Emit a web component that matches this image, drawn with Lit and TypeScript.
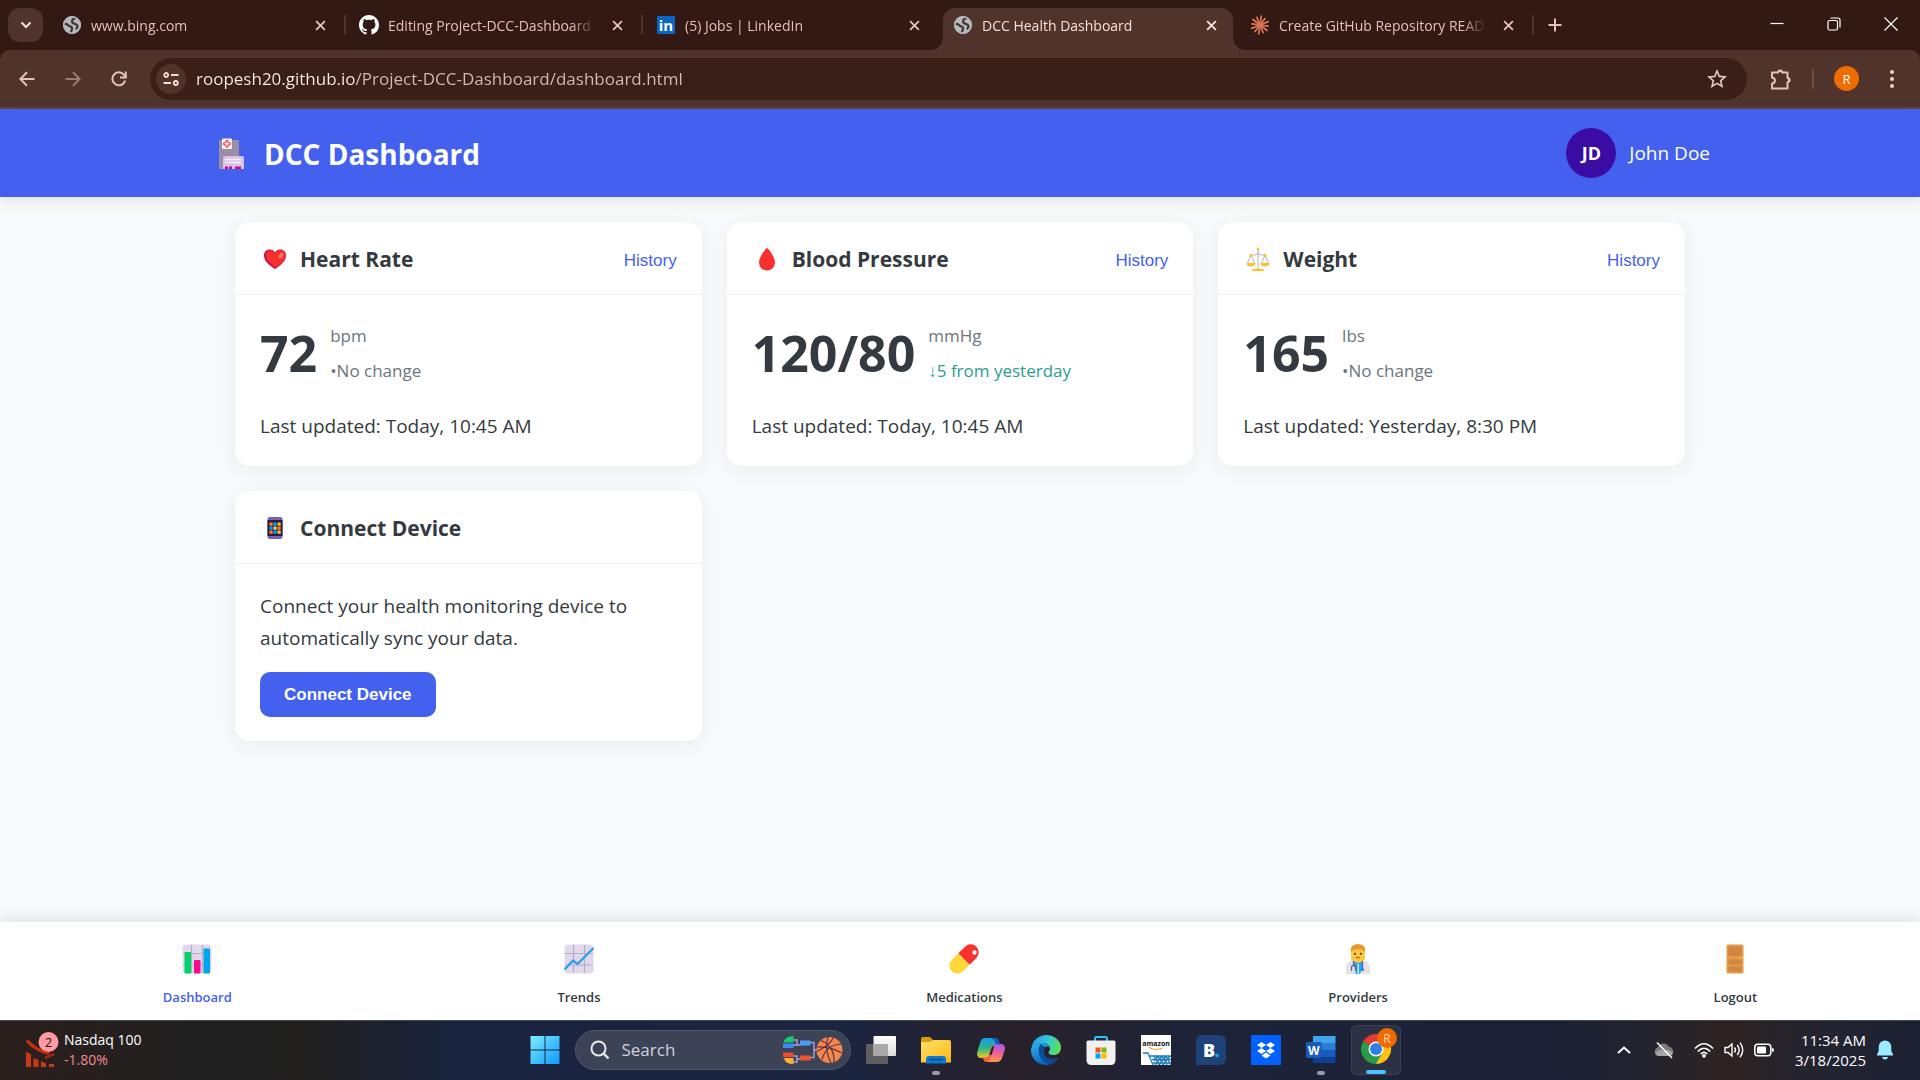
import { LitElement, html, css, svg, nothing, TemplateResult } from "lit";
import { customElement, property } from "lit/decorators.js";

type Icon = TemplateResult;

const globe: Icon = html`<svg viewBox="0 0 18 18" width="18" height="18" aria-hidden="true"><circle cx="9" cy="9" r="9" fill="#b4b9be"/><path d="M12.500 2.200C8.500 2.800 8 6.800 11 7.600S15.500 9.500 13.500 12.500M1.800 8C4.500 7.500 5 10 7.200 10.300S9.500 13 8 15.800" fill="none" stroke="#453330" stroke-width="2.200" stroke-linecap="round"/><circle cx="9" cy="9" r="8.200" fill="none" stroke="#b4b9be" stroke-width="1.600"/></svg>`;

const github: Icon = html`<svg viewBox="0 0 16 16" width="20" height="20" aria-hidden="true"><path fill="#fff" d="M8 0C3.58 0 0 3.58 0 8c0 3.54 2.29 6.53 5.47 7.59.4.07.55-.17.55-.38 0-.19-.01-.82-.01-1.49-2.01.37-2.53-.49-2.69-.94-.09-.23-.48-.94-.82-1.13-.28-.15-.68-.52-.01-.53.63-.01 1.08.58 1.23.82.72 1.21 1.87.87 2.33.66.07-.52.28-.87.51-1.07-1.78-.2-3.64-.89-3.64-3.95 0-.87.31-1.59.82-2.15-.08-.2-.36-1.02.08-2.12 0 0 .67-.21 2.2.82.64-.18 1.32-.27 2-.27.68 0 1.36.09 2 .27 1.53-1.04 2.2-.82 2.2-.82.44 1.1.16 1.92.08 2.12.51.56.82 1.27.82 2.15 0 3.07-1.87 3.75-3.65 3.95.29.25.54.73.54 1.48 0 1.07-.01 1.93-.01 2.2 0 .21.15.46.55.38A8.013 8.013 0 0016 8c0-4.42-3.58-8-8-8z"/></svg>`;

const linkedin: Icon = html`<svg viewBox="0 0 18 18" width="18" height="18" aria-hidden="true"><rect width="18" height="18" rx="1" fill="#0a66c2"/><text x="9" y="15" text-anchor="middle" font-family="Open Sans, sans-serif" font-weight="700" font-size="15" fill="#fff">in</text></svg>`;

const burst: Icon = html`<svg viewBox="0 0 20 20" width="20" height="20" aria-hidden="true"><g stroke="#d97757" stroke-width="1.7" stroke-linecap="round">${Array.from({ length: 12 }, (_, i) => {
  const a = (i * 30 + 8) * (Math.PI / 180);
  const r = i % 2 ? 9 : 8.2;
  return svg`<line x1="10" y1="10" x2=${(10 + r * Math.cos(a)).toFixed(1)} y2=${(10 + r * Math.sin(a)).toFixed(1)}/>`;
})}</g></svg>`;

const cross: Icon = html`<svg viewBox="0 0 10 10" width="11" height="11" aria-hidden="true"><path d="M1 1l8 8M9 1l-8 8" stroke="currentColor" stroke-width="1.7" fill="none"/></svg>`;

const hospital: Icon = html`<svg viewBox="0 0 30 32" width="30" height="32" aria-hidden="true"><rect x="4" y="2" width="20" height="29" rx="1" fill="#998ea4"/><rect x="7" y="0.5" width="10" height="10.5" rx="1" fill="#f3eef8"/><path d="M11 2.500h2v2.300h2.300v2h-2.300v2.300h-2v-2.300H8.700v-2H11z" fill="#fff" stroke="#f8312f" stroke-width="1"/><path d="M8 20a2 2 0 0 1 2-2h17a2 2 0 0 1 2 2v11H8z" fill="#d9c3ee"/><path d="M10 21.500h16M10 24.500h16" stroke="#f6effc" stroke-width="1.300"/><path d="M10 28.500h3v2.500h-3zM14 28.500h3v2.500h-3zM20 28.500h6v2.500h-6z" fill="#ca0b7b"/></svg>`;

const heart: Icon = html`<svg viewBox="0 0 24 22" width="24" height="22" aria-hidden="true"><path d="M12 21C6 17 1 13 1 7.500 1 4 3.500 1.500 6.700 1.500c2.300 0 4.300 1.200 5.300 3 1-1.800 3-3 5.300-3C20.500 1.500 23 4 23 7.500c0 5.500-5 9.500-11 13.500z" fill="#ca0b4a"/><path d="M12.500 19.500C7.500 16 3 12.500 3 7.500 3 4.500 5 2.200 7.400 2.200c2.200 0 3.900 1.300 4.600 3.300 1-2.200 3-3.500 5.300-3.500 3 0 5.200 2.400 5.200 5.500 0 5-4.500 8.500-10 12z" fill="#f8312f"/><ellipse cx="18" cy="7.500" rx="2" ry="3.200" transform="rotate(30 18 7.500)" fill="#f37366"/></svg>`;

const drop: Icon = html`<svg viewBox="0 0 24 24" width="24" height="24" aria-hidden="true"><path d="M12 1c1.200 0 8 9 8 14.500A8 8 0 0 1 4 15.500C4 10 10.800 1 12 1z" fill="#f8312f"/></svg>`;

const scales: Icon = html`<svg viewBox="0 0 24 24" width="24" height="24" aria-hidden="true"><path d="M12 3v19M5 8h4q3 0 3-3 0 3 3 3h4M5 8l-3.500 8M5 8l3.500 8M19 8l-3.500 8M19 8l3.500 8" fill="none" stroke="#b9b2bd" stroke-width="1"/><path d="M0.500 16h9a4.500 3.500 0 0 1-9 0zM14.500 16h9a4.500 3.500 0 0 1-9 0zM5.500 24q0-2.500 6.500-2.500t6.500 2.500z" fill="#fcc02e"/><circle cx="12" cy="2" r="1.400" fill="#fcc02e"/><circle cx="5" cy="8.500" r="1.400" fill="#fcc02e"/><circle cx="19" cy="8.500" r="1.400" fill="#fcc02e"/></svg>`;

const phoneDots = ["#ff822d", "#00a6ed", "#fcc02e", "#00a6ed", "#ffd03e", "#ff822d", "#ff822d", "#00a6ed", "#ffd03e"];
const phone: Icon = html`<svg viewBox="0 0 24 24" width="24" height="24" aria-hidden="true"><rect x="4.500" y="1" width="15" height="22" rx="2" fill="#7867a8"/><rect x="4.500" y="4" width="15" height="16" fill="#2f1a42"/>${phoneDots.map((c, i) => svg`<rect x=${6.5 + (i % 3) * 4} y=${6.5 + Math.floor(i / 3) * 4} width="3.200" height="3.200" rx="0.500" fill=${c}/>`)}</svg>`;

const grid = svg`<rect x="0.500" y="0.500" width="29" height="29" rx="3.500" fill="#e1d8ec"/><path d="M9.500 1v28M20.500 1v28M1 9.500h28M1 21h28" stroke="#b7adc4" stroke-width="1.200"/>`;
const bars: Icon = html`<svg viewBox="0 0 30 30" width="30" height="30" aria-hidden="true">${grid}<rect x="2.500" y="8" width="6.500" height="21.500" rx="1" fill="#00d26a"/><rect x="12" y="16" width="6.500" height="13.500" rx="1" fill="#f70a8d"/><rect x="21.500" y="4.500" width="6.500" height="25" rx="1" fill="#00a6ed"/></svg>`;
const trend: Icon = html`<svg viewBox="0 0 30 30" width="30" height="30" aria-hidden="true">${grid}<path d="M0.500 25.500L9 16.500l4.500 3.500L29.500 4" fill="none" stroke="#26a0ee" stroke-width="2.200"/></svg>`;
const pill: Icon = html`<svg viewBox="0 0 30 30" width="30" height="30" aria-hidden="true"><g transform="rotate(-45 15 15)"><path d="M15 7H5.500a8 8 0 0 0 0 16H15z" fill="#ffd83b"/><path d="M15 7h9.500a8 8 0 0 1 0 16H15z" fill="#f8312f"/></g><circle cx="25.500" cy="8.500" r="2.200" fill="#fff"/></svg>`;
const doctor: Icon = html`<svg viewBox="0 0 30 30" width="30" height="30" aria-hidden="true"><path d="M3 30v-6a8 8 0 0 1 8-8h8a8 8 0 0 1 8 8v6z" fill="#e3e3e6"/><path d="M11 16l4 3 4-3 1 6-3 8h-4l-2-8z" fill="#26a6ee"/><path d="M14.500 20h1.500v10h-1.500z" fill="#cfe9fa"/><path d="M8 7c0-5 3-6.500 7-6.500S22 2 22 7v7c0 2-3 4.500-7 4.500S8 16 8 14z" fill="#ffc83d"/><path d="M8 8C7 2 10.500.2 15 .2S23 2 22 8c-1.500-1-2-2.500-4-2.700q-3-.3-6 0C10 5.500 9.500 7 8 8z" fill="#e8952b"/><circle cx="12" cy="9.800" r="1" fill="#4a2c12"/><circle cx="18" cy="9.800" r="1" fill="#4a2c12"/><path d="M13 14q2-1.500 4 0" stroke="#b5552b" stroke-width="1.200" fill="none"/><path d="M10.500 17v4M8.500 27v-3.500a2.200 2.200 0 0 1 4.400 0V27M19.500 17v8" stroke="#6d5ca3" stroke-width="1.300" fill="none"/><circle cx="19.500" cy="25.500" r="1.600" fill="#1b86d8"/></svg>`;
const door: Icon = html`<svg viewBox="0 0 30 30" width="30" height="30" aria-hidden="true"><rect x="6.500" y="0.500" width="17" height="29" rx="1.500" fill="#e39a4a"/><path d="M8.500 2.500h13v9.500h-13zM8.500 15.500h13v5h-13zM8.500 22.500h13v5h-13z" fill="#d1863f"/><circle cx="21.500" cy="13.500" r="1.300" fill="#fcc02e"/></svg>`;

@customElement("browser-chrome")
class BrowserChrome extends LitElement {
  static styles = css`
    :host { display: block; background: #331913; color: #e7c1b6; font-size: 14px; }
    * { box-sizing: border-box; }
    button { font: inherit; color: inherit; background: none; border: 0; padding: 0; display: flex; align-items: center; justify-content: center; cursor: pointer; }
    svg { flex: none; display: block; }
    .strip { display: flex; height: 50px; align-items: stretch; }
    .search-tabs { width: 35px; height: 34px; margin: 8px 5px 8px 8px; border-radius: 12px; background: #50342c; }
    .tab { position: relative; display: flex; align-items: center; flex: 0 1 297px; min-width: 0; padding: 0 17px 8px 14px; margin-top: 8px; }
    .tab .select { flex: 1; min-width: 0; height: 34px; gap: 9px; justify-content: flex-start; }
    .tab .glyph { width: 20px; display: flex; justify-content: center; flex: none; }
    .title { flex: 1; text-align: left; white-space: nowrap; overflow: hidden; line-height: 20px; padding-top: 1px; mask-image: linear-gradient(90deg, #000 88%, transparent); }
    .close { width: 16px; height: 16px; margin-left: 13px; }
    .tab.divided::after { content: ""; position: absolute; right: -1px; top: 7px; width: 2px; height: 19px; background: #50342c; }
    .tab.active { color: #f8e0d8; }
    .tab.active::before { content: ""; position: absolute; inset: 0 3px 0 4px; background: #50342c; border-radius: 12px 12px 0 0; }
    .tab.active::after { content: ""; position: absolute; left: -8px; right: -9px; bottom: 0; height: 12px; background: radial-gradient(circle at 0 0, transparent 12px, #50342c 12px) left / 12px 12px no-repeat, radial-gradient(circle at 100% 0, transparent 12px, #50342c 12px) right / 12px 12px no-repeat; }
    .tab.active > * { position: relative; z-index: 1; }
    .new-tab { width: 44px; height: 34px; margin-top: 8px; }
    .window { display: flex; margin-left: auto; padding-right: 1px; color: #fff; }
    .window button { width: 57px; height: 48px; }
    .toolbar { display: flex; align-items: center; height: 59px; padding: 0 10px 0 9px; background: #50342c; border-radius: 10px 10px 0 0; border-bottom: 2px solid #5b443e; }
    .toolbar > button { width: 36px; height: 36px; }
    .nav-btns { display: flex; gap: 10px; }
    .nav-btns button { width: 36px; height: 36px; }
    .dim { opacity: 0.5; }
    .omnibox { display: flex; flex: 1; align-items: center; height: 42px; margin: 0 16px 0 13px; padding: 0 19px 0 6px; border-radius: 21px; background: #3a1f18; }
    .site { width: 30px; height: 30px; border-radius: 50%; background: #50342c; flex: none; }
    .url { flex: 1; min-width: 0; margin-left: 10px; padding: 0; border: 0; outline: 0; font: inherit; font-size: 17px; height: 30px; color: transparent; background: linear-gradient(90deg, #fff0ea 158px, #d6bdb4 158px); background-clip: text; -webkit-background-clip: text; }
    .rule { width: 2px; height: 20px; background: #6d4c43; margin: 0 14px 0 13px; }
    .avatar { width: 25px; height: 25px; border-radius: 50%; background: #ef6c00; color: #fff; font-size: 13px; margin: 0 6px; }
    .toolbar > .avatar { width: 25px; height: 25px; }
    .toolbar > .more { margin-left: 9px; }
  `;

  render() {
    const tabs = [
      { title: "www.bing.com", icon: globe, divided: true },
      { title: "Editing Project-DCC-Dashboard", icon: github, divided: true },
      { title: "(5) Jobs | LinkedIn", icon: linkedin },
      { title: "DCC Health Dashboard", icon: globe, active: true },
      { title: "Create GitHub Repository READ", icon: burst, divided: true },
    ];
    return html`
      <div class="strip">
        <button class="search-tabs" aria-label="Search tabs"><svg viewBox="0 0 12 8" width="12" height="8"><path d="M1.500 1.500L6 6l4.500-4.500" fill="none" stroke="#fbe1d8" stroke-width="2"/></svg></button>
        ${tabs.map((t) => html`<div class="tab ${t.active ? "active" : ""} ${t.divided ? "divided" : ""}">
          <button class="select"><span class="glyph">${t.icon}</span><span class="title">${t.title}</span></button>
          <button class="close" aria-label="Close tab">${cross}</button>
        </div>`)}
        <button class="new-tab" aria-label="New tab"><svg viewBox="0 0 14 14" width="14" height="14"><path d="M7 0.500v13M0.500 7h13" stroke="currentColor" stroke-width="2"/></svg></button>
        <div class="window">
          <button aria-label="Minimize"><svg viewBox="0 0 14 14" width="14" height="14"><path d="M0.500 6.500h13" stroke="#fff" stroke-width="1.200"/></svg></button>
          <button aria-label="Restore"><svg viewBox="0 0 14 14" width="14" height="14"><rect x="1" y="3.500" width="9.500" height="9.500" rx="1.500" fill="none" stroke="#fff" stroke-width="1.200"/><path d="M3.500 1h7.500a2 2 0 0 1 2 2v7.500" fill="none" stroke="#fff" stroke-width="1.200"/></svg></button>
          <button aria-label="Close window"><svg viewBox="0 0 14 14" width="14" height="14"><path d="M0.500 0.500l13 13M13.500 0.500l-13 13" stroke="#fff" stroke-width="1.200"/></svg></button>
        </div>
      </div>
      <div class="toolbar">
        <div class="nav-btns">
          <button aria-label="Back"><svg viewBox="0 0 16 16" width="16" height="16"><path d="M15.500 8H1.800M8 1.300L1.300 8 8 14.700" fill="none" stroke="currentColor" stroke-width="2"/></svg></button>
          <button class="dim" aria-label="Forward"><svg viewBox="0 0 16 16" width="16" height="16"><path d="M0.500 8h13.700M8 1.300L14.700 8 8 14.700" fill="none" stroke="currentColor" stroke-width="2"/></svg></button>
          <button aria-label="Reload"><svg viewBox="0 0 16 16" width="16" height="16"><path d="M14.200 9.500A6.500 6.500 0 1 1 12.800 3.500L14.500 5.500" fill="none" stroke="currentColor" stroke-width="2"/><path d="M14.800 0.500v6H9" fill="none" stroke="currentColor" stroke-width="2"/></svg></button>
        </div>
        <div class="omnibox">
          <button class="site" aria-label="Site information"><svg viewBox="0 0 16 16" width="16" height="16"><g fill="none" stroke="#f7dcd3" stroke-width="1.800"><circle cx="3.200" cy="4" r="2"/><path d="M8 4h7.500M0.500 12H8"/><circle cx="12.800" cy="12" r="2"/></g></svg></button>
          <input class="url" aria-label="Address" spellcheck="false" value="roopesh20.github.io/Project-DCC-Dashboard/dashboard.html">
          <button aria-label="Bookmark"><svg viewBox="1 1 22 22" width="22" height="22"><path fill="#e3cbc3" d="M22 9.240l-7.190-.62L12 2 9.190 8.630 2 9.240l5.460 4.730L5.820 21 12 17.270 18.180 21l-1.630-7.030L22 9.240zM12 15.400l-3.760 2.270 1-4.280-3.320-2.880 4.380-.38L12 6.100l1.710 4.040 4.380.38-3.320 2.880 1 4.280L12 15.400z"/></svg></button>
        </div>
        <button aria-label="Extensions"><svg viewBox="0 0 22 22" width="22" height="22"><path d="M2 4.500h6.200a2 2 0 0 1 4 0H17.500V10a2 2 0 0 1 0 4.200V20.500H2V15.500a2.800 2.800 0 0 0 0-5.800z" fill="none" stroke="currentColor" stroke-width="2" stroke-linejoin="round"/><path d="M8.500 4a2 2 0 0 1 4 0zM18 10.200a2 2 0 0 1 0 4z" fill="currentColor"/></svg></button>
        <span class="rule"></span>
        <button class="avatar" aria-label="Profile R">R</button>
        <button class="more" aria-label="Menu"><svg viewBox="0 0 4 18" width="4" height="18"><g fill="#f7cfc3"><circle cx="2" cy="2" r="2"/><circle cx="2" cy="9" r="2"/><circle cx="2" cy="16" r="2"/></g></svg></button>
      </div>`;
  }
}

@customElement("metric-card")
class MetricCard extends LitElement {
  @property() heading = "";
  @property({ type: Boolean }) history = false;
  @property({ attribute: false }) icon: Icon | typeof nothing = nothing;

  static styles = css`
    :host { display: block; background: #fff; border-radius: 15px; box-shadow: 0 5px 19px rgba(0, 0, 0, 0.05); overflow: hidden; }
    header { display: flex; align-items: center; justify-content: space-between; box-sizing: border-box; height: 73px; padding: 1px 25px 0; border-bottom: 1px solid #f0f0f0; }
    h2 { display: flex; align-items: center; gap: 10px; margin: 0; font-size: 21px; line-height: 32px; font-weight: 700; }
    .icon { display: flex; justify-content: center; width: 30px; }
    .icon svg { display: block; }
    button { border: 0; background: none; padding: 4px 0 0 0; color: #4361ee; font: 17px "Liberation Sans", Arial, sans-serif; cursor: pointer; }
    .body { padding: 26px 25px 24px; }
  `;

  render() {
    return html`
      <header>
        <h2><span class="icon">${this.icon}</span>${this.heading}</h2>
        ${this.history ? html`<button>History</button>` : nothing}
      </header>
      <div class="body"><slot></slot></div>`;
  }
}

@customElement("health-dashboard")
class HealthDashboard extends LitElement {
  static styles = css`
    :host { display: flex; flex-direction: column; flex: 1; background: #f8f9fb; color: #343a40; font-size: 19px; line-height: 32px; }
    * { box-sizing: border-box; }
    .top { background: #4361ee; color: #fff; box-shadow: 0 3px 13px rgba(0, 0, 0, 0.1); }
    .wrap { display: flex; align-items: center; justify-content: space-between; max-width: 1500px; margin: 0 auto; height: 88px; }
    .brand { display: flex; align-items: center; gap: 19px; margin: 0; padding: 2px 0 0 5px; font-size: 28px; line-height: 48px; font-weight: 700; }
    .user { display: flex; align-items: center; gap: 13px; }
    .avatar { display: flex; align-items: center; justify-content: center; width: 50px; height: 50px; border-radius: 50%; background: #3a0ca3; font-size: 18px; font-weight: 700; }
    .cards { display: grid; grid-template-columns: repeat(auto-fill, minmax(375px, 1fr)); gap: 25px; align-content: start; width: 100%; max-width: 1500px; margin: 0 auto; padding: 25px; flex: 1; }
    .metric { display: flex; align-items: center; gap: 13px; margin-bottom: 25px; }
    .value { font-size: 50px; line-height: 64px; font-weight: 700; }
    .details { display: flex; flex-direction: column; gap: 6px; font-size: 17px; line-height: 29px; color: #6c757d; }
    .down { color: #2a9d8f; }
    p { margin: 0; }
    .hint { margin-bottom: 18px; }
    .connect { display: block; height: 45px; padding: 0 24px; border: 0; border-radius: 10px; background: #4361ee; color: #fff; font: bold 17px "Liberation Sans", Arial, sans-serif; cursor: pointer; }
    .bottom { display: flex; justify-content: space-around; height: 98px; background: #fff; box-shadow: 0 -3px 13px rgba(0, 0, 0, 0.1); }
    .bottom a { display: flex; flex-direction: column; align-items: center; gap: 11px; padding-top: 22px; color: #343a40; text-decoration: none; font-size: 13px; line-height: 24px; font-weight: 600; }
    .bottom a.current { color: #4361ee; }
    svg { display: block; }
  `;

  render() {
    const metrics = [
      { name: "Heart Rate", icon: heart, value: "72", unit: "bpm", change: "•No change", when: "Today, 10:45 AM" },
      { name: "Blood Pressure", icon: drop, value: "120/80", unit: "mmHg", change: "↓5 from yesterday", down: true, when: "Today, 10:45 AM" },
      { name: "Weight", icon: scales, value: "165", unit: "lbs", change: "•No change", when: "Yesterday, 8:30 PM" },
    ];
    const links = [
      { name: "Dashboard", icon: bars, current: true },
      { name: "Trends", icon: trend },
      { name: "Medications", icon: pill },
      { name: "Providers", icon: doctor },
      { name: "Logout", icon: door },
    ];
    return html`
      <header class="top"><div class="wrap">
        <h1 class="brand">${hospital}<span>DCC Dashboard</span></h1>
        <div class="user"><span class="avatar">JD</span><span>John Doe</span></div>
      </div></header>
      <main class="cards">
        ${metrics.map((m) => html`<metric-card .heading=${m.name} .icon=${m.icon} history>
          <div class="metric">
            <span class="value">${m.value}</span>
            <div class="details"><span>${m.unit}</span><span class=${m.down ? "down" : ""}>${m.change}</span></div>
          </div>
          <p>Last updated: ${m.when}</p>
        </metric-card>`)}
        <metric-card .heading=${"Connect Device"} .icon=${phone}>
          <p class="hint">Connect your health monitoring device to automatically sync your data.</p>
          <button class="connect">Connect Device</button>
        </metric-card>
      </main>
      <nav class="bottom">
        ${links.map((l) => html`<a href="#${l.name.toLowerCase()}" class=${l.current ? "current" : ""}>${l.icon}<span>${l.name}</span></a>`)}
      </nav>`;
  }
}

const taskIcons: { name: string; icon: Icon; state?: string }[] = [
  { name: "Task view", icon: html`<svg viewBox="0 0 30 30" width="30" height="30"><defs><linearGradient id="tv" x1="0" y1="0" x2="0" y2="1"><stop stop-color="#fff"/><stop offset="1" stop-color="#dcdcdc"/></linearGradient></defs><rect x="0" y="9" width="22" height="20" rx="1" fill="#5f5f61"/><rect x="7.500" y="1" width="22.500" height="20" rx="1" fill="url(#tv)"/><path d="M7.500 9H22v12H7.500z" fill="#a9a9a9"/></svg>` },
  { name: "File Explorer", state: "open", icon: html`<svg viewBox="0 0 30 30" width="30" height="30"><defs><linearGradient id="fe" x1="0" y1="0" x2="1" y2="1"><stop stop-color="#ffe06a"/><stop offset="1" stop-color="#fdb813"/></linearGradient></defs><path d="M0 4a2 2 0 0 1 2-2h7l4 4H28v8H0z" fill="#dc9b0a"/><path d="M0 8q0-1 1-1h8l3-2h16a2 2 0 0 1 2 2v20.500H0z" fill="url(#fe)"/><path d="M5 28.500V24a3 3 0 0 1 3-3h14a3 3 0 0 1 3 3v4.500z" fill="#0f78d0"/><path d="M9 24.500h12" stroke="#084a86" stroke-width="1.400" stroke-linecap="round"/></svg>` },
  { name: "Copilot", icon: html`<svg viewBox="0 0 30 30" width="30" height="30"><defs><linearGradient id="c1" x1="0" y1="0" x2="0" y2="1"><stop stop-color="#1a9bf0"/><stop offset="0.500" stop-color="#27b98c"/><stop offset="1" stop-color="#f2cc1c"/></linearGradient><linearGradient id="c2" x1="0" y1="0" x2="0" y2="1"><stop stop-color="#a95af0"/><stop offset="0.500" stop-color="#ee5c95"/><stop offset="1" stop-color="#ff9a4d"/></linearGradient></defs><path d="M9 3h10q3 0 4 4l1 3h-5q-3 0-4 4l-2 7q-1 2-4 2H5Q1 23 1 18L4 8Q5.500 3 9 3z" fill="url(#c1)"/><path d="M21 27H11q-3 0-4-4l-.5-1H10q3 0 4-3l3-8q1-2 4-2h4q4 0 4 5l-3 9q-1.500 4-5 4z" fill="url(#c2)"/><path d="M9 3h10q3 0 4 4l1 2.500h-4Q18 3.500 14 3z" fill="#1457c9"/><path d="M12 22l3.500-11h3L14 24q-1 3-4 3-2-1-3-4.500 4 1 5-.5z" fill="#f0642f"/><path d="M13.500 19.500l2.500-8h2.200L15.500 20z" fill="#1f2233"/></svg>` },
  { name: "Edge", icon: html`<svg viewBox="0 0 30 30" width="30" height="30"><defs><linearGradient id="e1" x1="0" y1="0.300" x2="1" y2="0.600"><stop stop-color="#249be8"/><stop offset="0.500" stop-color="#35c8da"/><stop offset="1" stop-color="#5fe04b"/></linearGradient><linearGradient id="e2" x1="0" y1="0" x2="0.500" y2="1"><stop stop-color="#2fb4ee"/><stop offset="1" stop-color="#0a5fb8"/></linearGradient></defs><path d="M0.500 13C1.500 5 8 0 15 0c8.500 0 15 6 15 12.500 0 5-3.500 7.500-7.500 7.500-4 0-5-1.500-5-2.500 0-1 1.500-1.500 1.500-4C19 10 15 8 11 8 5 8 1 11 .5 13z" fill="url(#e1)"/><path d="M0 15C0 11 4.500 8 10.500 8 15 8 19 10.500 19 13.500c0-2.500-6.500-3.500-6.500 3 0 6 6.500 9.500 14.500 6.500C24.500 27.500 20 30 15 30 6.500 30 0 23.500 0 15z" fill="url(#e2)"/><path d="M10 9c-4 3.500-3.500 16.500 9 20.500 3.500-1 6-3.500 8-6.500-8 3-14.500-.5-14.500-6.500 0-2 .8-3.500 2-4z" fill="#0c4a98"/></svg>` },
  { name: "Store", icon: html`<svg viewBox="0 0 30 30" width="30" height="30"><path d="M9 7V3.500Q9 2 10.500 2h9Q21 2 21 3.500V7" fill="none" stroke="#2cc3f5" stroke-width="2"/><path d="M0.500 7Q0.500 5.500 2 5.500h26q1.500 0 1.500 1.500v18q0 5-5 5h-19q-5 0-5-5z" fill="#f1f1f1"/><path d="M9.500 12.500h5v5h-5z" fill="#f25022"/><path d="M15.500 12.500h5v5h-5z" fill="#7fba00"/><path d="M9.500 18.500h5v5h-5z" fill="#00a4ef"/><path d="M15.500 18.500h5v5h-5z" fill="#ffb900"/></svg>` },
  { name: "Amazon", icon: html`<svg viewBox="0 0 30 30" width="30" height="30"><rect width="30" height="30" fill="#fff"/><text x="15" y="11" text-anchor="middle" font-family="Open Sans, sans-serif" font-weight="700" font-size="7" fill="#111">amazon</text><path d="M8 12.500q7 3.500 13 .5" fill="none" stroke="#f90" stroke-width="1"/><path d="M2 18h5l5 12M9 21h21M11 24.500h19M12 28h18M13 21l5 9M17 21l5 9M21 21l5 9M25 21l5 9M29 21l-7 9M25 21l-7 9M21 21l-7 9M17 21l-4 5" fill="none" stroke="#1b7fb5" stroke-width="1.300"/></svg>` },
  { name: "Booking", icon: html`<svg viewBox="0 0 30 30" width="30" height="30"><path d="M0 6a6 6 0 0 1 6-6h18a6 6 0 0 1 6 6v18a6 6 0 0 1-6 6H0z" fill="#1e4378"/><text x="7" y="22" font-family="Open Sans, sans-serif" font-weight="800" font-size="18" fill="#fff">B</text><circle cx="21" cy="20.500" r="1.900" fill="#12a5e8"/></svg>` },
  { name: "Dropbox", icon: html`<svg viewBox="0 0 30 30" width="30" height="30"><rect width="30" height="30" fill="#0061fe"/><path d="M10.500 7l4.500 3-4.500 3L6 10zM19.500 7l4.500 3-4.500 3-4.500-3zM10.500 13l4.500 3-4.500 3L6 16zM19.500 13l4.500 3-4.500 3-4.500-3zM15 17.500l4.500 3-4.500 3-4.500-3z" fill="#fff"/></svg>` },
  { name: "Word", state: "open", icon: html`<svg viewBox="0 0 30 30" width="30" height="30"><path d="M7 1h22.500v7H7z" fill="#41a5ee"/><path d="M7 8h22.500v7H7z" fill="#2b7cd3"/><path d="M7 15h22.500v7H7z" fill="#185abd"/><path d="M7 22h22.500v6H7z" fill="#103f91"/><rect x="0" y="7" width="15.500" height="16" rx="1" fill="#185abd"/><text x="7.700" y="19.500" text-anchor="middle" font-family="Open Sans, sans-serif" font-weight="700" font-size="12" fill="#fff">W</text></svg>` },
  { name: "Chrome", state: "active", icon: html`<svg class="chrome" viewBox="0 0 40 36" width="40" height="36"><path d="M15 21L2 13.500A15 15 0 0 1 28 13.500z" fill="#e33b2e"/><path d="M15 21L28 13.500A15 15 0 0 1 15 36z" fill="#fbc116"/><path d="M15 21v0L2 13.500A15 15 0 0 0 15 36L21.500 24.800z" fill="#2a9d49"/><circle cx="15" cy="21" r="7.500" fill="#fff"/><circle cx="15" cy="21" r="6" fill="#2f7de9"/><circle cx="26" cy="10" r="10" fill="#ee6a02"/><text x="26" y="14.500" text-anchor="middle" font-family="Open Sans, sans-serif" font-size="12" fill="#ffd9b5">R</text></svg>` },
];

@customElement("task-bar")
class TaskBar extends LitElement {
  static styles = css`
    :host { display: grid; grid-template-columns: 1fr auto 1fr; align-items: center; height: 60px; padding-bottom: 1px; box-sizing: border-box; border-top: 1px solid #45474e; color: #fff; font-size: 14px; line-height: 20px;
      background: linear-gradient(90deg, #2b1f1c 0, #212021 10%, #21201f 16%, #1a2440 24%, #1b2540 44%, #29212a 53%, #1d2338 62%, #1b2137 80%, #222330 85%, #2e2322 90%, #222431 95%, #1c2133 100%); }
    * { box-sizing: border-box; }
    svg { display: block; flex: none; overflow: visible; }
    button { display: flex; align-items: center; justify-content: center; font: inherit; color: inherit; background: none; border: 0; padding: 0; cursor: pointer; }
    .widget { justify-self: start; gap: 8px; padding-left: 26px; text-align: left; }
    .widget span span { display: block; }
    .loss { color: #f28b94; }
    .apps { display: flex; align-items: center; gap: 5px; }
    .app { position: relative; width: 50px; height: 50px; border-radius: 6px; }
    .app.active { background: rgba(255, 255, 255, 0.07); border: 1px solid rgba(255, 255, 255, 0.08); }
    .app.open::after, .app.active::after { content: ""; position: absolute; bottom: 0; width: 8px; height: 4px; border-radius: 2px; background: #9a9ca4; }
    .app.active::after { width: 20px; background: #4cc2ff; }
    .chrome { margin: 0 0 8px 10px; }
    .search { display: flex; align-items: center; gap: 12px; width: 276px; height: 40px; padding: 0 7px 0 14px; border-radius: 20px; background: #3c4357; border: 1px solid #50566a; }
    .search input { flex: 1; min-width: 0; border: 0; outline: 0; padding: 0; background: none; font: inherit; font-size: 17px; color: #fff; }
    .search input::placeholder { color: #cfd1d8; opacity: 1; }
    .tray { display: flex; align-items: center; justify-self: end; padding-right: 23px; }
    .tray button { width: 30px; height: 40px; }
    .tray .wide { width: 40px; }
    .tray .sys { width: 90px; margin-left: 5px; }
    .sys svg { margin: 0 5px; }
    .tray .clock { display: block; width: auto; text-align: right; margin-left: 16px; font-size: 15px; }
    .clock span { display: block; }
    .tray .bell { width: 24px; margin-left: 7px; }
  `;

  render() {
    return html`
      <button class="widget">
        <svg viewBox="0 0 30 36" width="30" height="36" aria-hidden="true"><path d="M1 8.500q7 9 22 13" fill="none" stroke="#c3300f" stroke-width="3.200"/><path d="M19 26l9-4" stroke="#9e2410" stroke-width="3"/><path d="M0 20l5 2v13H0zM7.500 26l5 2v7h-5zM15 29l5 2.500V35h-5zM23 32h5v3h-5z" fill="#c93a14"/><circle cx="22.500" cy="10" r="10" fill="#ff99a4"/><text x="22.500" y="15" text-anchor="middle" font-family="Open Sans, sans-serif" font-size="13" fill="#1c1414">2</text></svg>
        <span><span>Nasdaq 100</span><span class="loss">-1.80%</span></span>
      </button>
      <div class="apps">
        <button class="app" aria-label="Start"><svg viewBox="0 0 30 30" width="30" height="30"><defs><linearGradient id="win" gradientUnits="userSpaceOnUse" x1="0" y1="0" x2="30" y2="30"><stop stop-color="#7ff0ff"/><stop offset="1" stop-color="#0a94ff"/></linearGradient></defs><path d="M0.500 1h14v13.500H0.500zM15.500 1h14v13.500h-14zM0.500 15.500h14V29H0.500zM15.500 15.500h14V29h-14z" fill="url(#win)"/></svg></button>
        <label class="search">
          <svg viewBox="0 0 20 20" width="20" height="20" aria-hidden="true"><circle cx="8.500" cy="8.500" r="7" fill="none" stroke="#e8e9ee" stroke-width="2"/><path d="M13.700 13.700L18.500 18.500" stroke="#e8e9ee" stroke-width="2.400"/></svg>
          <input type="search" placeholder="Search" aria-label="Search">
          <svg viewBox="0 0 60 30" width="60" height="30" aria-hidden="true"><path d="M10 5h4v5h4M10 21h4v3h4M14 10h-4M14 24v3h-4M27 7.500h4v15h-4M31 15h4" fill="none" stroke="#a99fd6" stroke-width="1.500"/><path d="M1 7.500Q1.500 1 10.500 1v6.500z" fill="#1cc872"/><path d="M0 8.500h10.500V13H0z" fill="#3d8bf5"/><path d="M0 17.500h10.500V22H0z" fill="#ef4b2c"/><path d="M1 23h9.500v6Q2 29 1 23z" fill="#fbb034"/><path d="M17 5.500h10.500v5H17z" fill="#4c9bf8"/><path d="M17 20.500h10.500v5H17z" fill="#f2542d"/><circle cx="46.500" cy="15" r="13" fill="#f5874a"/><g fill="none" stroke="#59304a" stroke-width="1.200"><path d="M34 12q13-1 24.500 6M45 2q-4 12 3 26M38 5.500q14 6 13 22M58 9q-15 1-19 15.500M50 2.500q-1 6-16 14"/></g></svg>
        </label>
        ${taskIcons.map((t) => html`<button class="app ${t.state ?? ""}" aria-label=${t.name}>${t.icon}</button>`)}
      </div>
      <div class="tray">
        <button class="wide" aria-label="Hidden icons"><svg viewBox="0 0 14 8" width="14" height="8"><path d="M1 7l6-5.500L13 7" fill="none" stroke="#fff" stroke-width="2"/></svg></button>
        <button class="wide" aria-label="Cloud sync off"><svg viewBox="0 0 20 16" width="20" height="16"><path d="M5 14a4.500 4.500 0 0 1-1-8.800A6 6 0 0 1 15 5a4.600 4.600 0 0 1 1 9z" fill="#7d7a7b"/><path d="M1 11q4-5 9-2 5-3 9 2-1 3-3 3H4q-2 0-3-3z" fill="#a8a5a6"/><path d="M3 0.500L18 16" stroke="#fff" stroke-width="1.500"/></svg></button>
        <button class="sys" aria-label="Network, volume and battery">
          <svg viewBox="0 0 20 16" width="20" height="16"><g fill="none" stroke="#fff" stroke-width="1.600"><path d="M1 6.500q9-9.500 18 0M3.800 9.500q6.200-6.500 12.400 0M6.700 12q3.300-3.300 6.600 0"/></g><circle cx="10" cy="13.800" r="1.900" fill="#fff"/></svg>
          <svg viewBox="0 0 20 16" width="20" height="16"><g fill="none" stroke="#fff" stroke-width="1.400"><path d="M1 5.500h3L8 2v12l-4-3.500H1z"/><path d="M10.500 5.500q2 2.500 0 5M13.200 3q4 5 0 10M16 .7q5.500 7.300 0 14.600"/></g></svg>
          <svg viewBox="0 0 20 16" width="20" height="16"><rect x="0.800" y="2.300" width="16" height="11.500" rx="3" fill="none" stroke="#fff" stroke-width="1.500"/><rect x="3" y="4.500" width="9" height="7" rx="1" fill="#fff"/><path d="M18 6q2 0 2 2t-2 2z" fill="#fff"/></svg>
        </button>
        <button class="clock"><span>11:34 AM</span><span>3/18/2025</span></button>
        <button class="bell" aria-label="Notifications"><svg viewBox="0 0 16 20" width="16" height="20"><path d="M8 0.500a6.300 6.300 0 0 1 6.300 6.300V11l1.700 3.500v1H0v-1L1.700 11V6.800A6.300 6.300 0 0 1 8 .5zM5 17h6q-.5 2.500-3 2.500T5 17z" fill="#99ebff"/></svg></button>
      </div>`;
  }
}

@customElement("app-root")
class AppRoot extends LitElement {
  static styles = css`
    :host { display: flex; flex-direction: column; min-height: 100vh; font-family: "Open Sans", "Noto Sans", sans-serif; }
  `;
  render() {
    return html`<browser-chrome></browser-chrome><health-dashboard></health-dashboard><task-bar></task-bar>`;
  }
}
